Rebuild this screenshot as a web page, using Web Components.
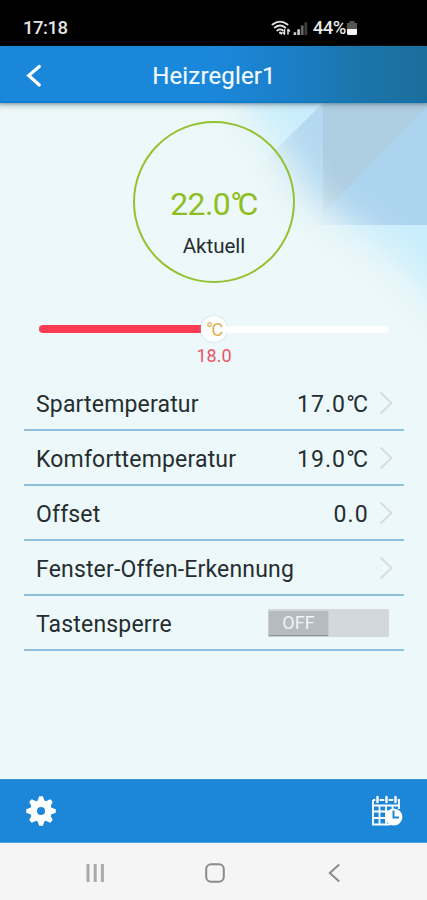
<!DOCTYPE html>
<html lang="de">
<head>
<meta charset="utf-8">
<title>Heizregler1</title>
<style>
html,body{margin:0;padding:0;height:900px;width:427px;overflow:hidden;background:#ecf8f9}
body{font-family:Roboto,"Noto Sans",sans-serif;color:#262d30}
</style>
</head>
<body>
<heat-app></heat-app>
<script>
function define(name, html) {
  const t = document.createElement('template');
  t.innerHTML = html;
  customElements.define(name, class extends HTMLElement {
    constructor() {
      super();
      this.attachShadow({mode: 'open'}).appendChild(t.content.cloneNode(true));
    }
  });
}

define('status-bar', `<style>
:host{display:flex;height:46px;background:#000;color:#e6e6e6;box-sizing:border-box;padding:10px 69px 0 23px;align-items:center;font-size:18.5px;font-weight:500}
.time{flex:1;letter-spacing:-.5px}
.pct{letter-spacing:-.5px;font-size:18.5px;margin-left:4px}
svg{display:block}
</style>
<span class="time">17:18</span>
<svg width="38" height="18" viewBox="0 0 38 18" fill="none" stroke="#e2e2e2" stroke-width="1.9" stroke-linecap="round">
<path d="M1.500 5.500Q9 -.2 16.500 5.500M3.800 8.600Q9 4.600 14.200 8.600M6.300 11.400Q9 9.400 11.800 11.400"/><path d="M9.200 13.700l1 .6" stroke-width="2.400"/>
<path d="M13.500 10.500v4.500M12 13.600l1.500 1.700M17 15v-4.500M18.500 12l-1.500-1.700" stroke-width="1.500"/>
<path fill="#ccc" stroke="none" d="M22.600 13.200h2.600V16h-2.600zM26.300 10.300h2.600V16h-2.600z"/><path fill="#666" stroke="none" d="M29.800 6.500h2.800V16h-2.800z"/><path fill="#3c3c3c" stroke="none" d="M33.400 3.200h2.800V16h-2.800z"/></svg>
<span class="pct">44%</span>
<svg width="12" height="18" viewBox="0 0 12 18"><path fill="#555" d="M3.500 2h5v2H11v6H1V4h2.500z"/><path fill="#f4f4f4" d="M1 10h10v4.500q0 1.500-1.500 1.500h-7Q1 16 1 14.500z"/></svg>`);

define('title-bar', `<style>
:host{display:grid;grid-template-columns:80px 1fr 80px;align-items:center;height:57px;box-sizing:border-box;padding-top:3px;color:#f3faff;background:linear-gradient(90deg,#1b87da 0 50%,#1b7fc9 67%,#1b75ab 84%,#1b6e9c);box-shadow:0 1px 3px #4b708999,inset 0 -2px #0077c270;position:relative;z-index:1}
svg{display:block;margin-left:25px}
h1{margin:0;text-align:center;font-size:24px;font-weight:400;line-height:30px;letter-spacing:.15px;padding-left:1px;-webkit-text-stroke:.15px}
</style>
<svg width="18" height="24" viewBox="0 0 18 24" fill="none" stroke="#fff" stroke-width="3.2" stroke-linecap="round"><path d="M14.300 2.500L3.700 11.500L14.300 21"/></svg>
<h1><slot></slot></h1>`);

define('temp-dial', `<style>
:host{display:flex;flex-direction:column;align-items:center;box-sizing:border-box;width:162px;height:162px;margin:18px 0 0 133px;border:2px solid #94c232;border-radius:50%;padding-top:62px}
.v{font-size:32px;line-height:38px;color:#8fbe22;letter-spacing:-.6px;white-space:nowrap}
.v i{font-style:normal;letter-spacing:-4.500px}
.l{font-size:20.500px;line-height:26px;margin-top:10px}
</style><div class="v">22.0<i>°</i>C</div><div class="l"><slot></slot></div>`);

define('temp-slider', `<style>
:host{display:flex;flex-direction:column;align-items:center;margin-top:32px;height:61px}
.t{display:flex;align-items:center;width:349px;height:28px}
.a{width:162px;height:8px;background:#fb3c52;border-radius:4px 0 0 4px}
.b{flex:1;height:7px;background:#fff;border-radius:0 4px 4px 0}
.k{width:26px;height:26px;border-radius:50%;background:#fff;box-shadow:0 0 2px #bcc;display:flex;align-items:center;justify-content:center;color:#e2ad55;font-size:18px;letter-spacing:-1.500px}
.n{font-size:18px;line-height:22px;color:#e95468;margin-top:2px;padding-left:1px}
</style><div class="t"><div class="a"></div><div class="k">°C</div><div class="b"></div></div><div class="n"><slot></slot></div>`);

define('setting-row', `<style>
:host{display:flex;align-items:center;box-sizing:border-box;height:55px;padding:4px 10px 0 12px;border-bottom:2px solid #8ec0dc;font-size:23px;white-space:nowrap}
.l{flex:1;letter-spacing:.17px}
svg{display:block;margin:-4px 0 0 9px}
.c{display:contents}
:host([switch]) .c{display:none}
::slotted(b){font-weight:400;letter-spacing:1.200px}
</style><span class="l"><slot></slot></span><slot name="value"></slot><div class="c">
<svg width="16" height="24" viewBox="0 0 16 24" fill="none" stroke="#d6dcde" stroke-width="1.800"><path d="M2.500 1.500L13.500 12L2.500 22.500"/></svg></div>`);

define('degree-value', `<style>:host{letter-spacing:1.100px}i{font-style:normal;letter-spacing:-1.800px}</style><slot></slot><i>°</i>C`);

define('off-switch', `<style>
:host{display:flex;width:121px;height:28px;background:#d2d8dc;margin-right:5px;margin-top:-4px;box-sizing:border-box;padding:2px 0 1px 1px;font-size:18px}
span{width:59px;height:24px;display:flex;align-items:center;justify-content:center;background:#b5bbc0;color:#eff4f6;box-shadow:0 1px 1px #8e969b}
</style><span>OFF</span>`);

define('tool-bar', `<style>
:host{display:flex;align-items:center;justify-content:space-between;height:64px;box-sizing:border-box;padding:0 24px 0 25px;background:#1c87d9;border-top:1px solid #3b91cc;border-bottom:1px solid #4aa0df}
svg{display:block}
</style>
<svg id="gear" width="32" height="32" viewBox="-16 -16 32 32"><g fill="#fff" stroke="#fff" stroke-linejoin="round"><circle r="10.500"/><g id="teeth" stroke-width="1.600"></g></g><circle r="4" fill="#1c87d9"/></svg>
<svg width="32" height="32" viewBox="0 0 32 32"><path fill="none" stroke="#fff" stroke-width="1.800" d="M2 5v24.500h17M2 5h26v9M2 10.500h26M2 16.500h17M2 23h15M8.500 10v19.500M15 10v19.500M21.500 10v6"/><path stroke="#1c87d9" stroke-width="4.400" d="M6.500 1v6M15.500 1v6M24.500 1v6"/><path stroke="#fff" stroke-width="2.400" stroke-linecap="round" d="M6.500 2v5M15.500 2v5M24.500 2v5"/><circle cx="22.800" cy="22" r="8.600" fill="#fff"/><path fill="none" stroke="#1c87d9" stroke-width="2" d="M22.500 15.500V22.500H28"/></svg>`);

define('nav-bar', `<style>
:host{display:grid;grid-template-columns:60px 1fr 60px;height:57px;box-sizing:border-box;padding:3px 63px 0 65px;align-items:center;justify-items:center;background:#f5f5f5}
svg{display:block}
</style>
<svg width="20" height="20" viewBox="0 0 20 20" stroke="#aaa" stroke-width="3"><path d="M3 1v18M10.200 1v18M17.400 1v18"/></svg>
<svg width="22" height="22" viewBox="0 0 22 22"><rect x="2.200" y="2.200" width="17.600" height="17.600" rx="5" fill="none" stroke="#8b8b8b" stroke-width="2"/></svg>
<svg width="14" height="20" viewBox="0 0 14 20" fill="none" stroke="#8b8b8b" stroke-width="2"><path d="M12.200 1.500L2.800 10L12.200 18.500"/></svg>`);

define('heat-app', `<style>
:host{display:flex;flex-direction:column;width:427px;height:900px;background:#ecf8f9}
main{height:676px;flex:none;position:relative}
.bg{position:absolute;right:0;top:0;display:block}
.content{position:relative;display:flex;flex-direction:column}
.list{margin:0 23px 0 24px}
</style>
<status-bar></status-bar><title-bar>Heizregler1</title-bar>
<main>
<svg class="bg" width="300" height="260" viewBox="127 103 300 260">
<defs><filter id="b" filterUnits="userSpaceOnUse" x="127" y="0" width="420" height="400"><feGaussianBlur stdDeviation="18"/></filter>
<mask id="k" maskUnits="userSpaceOnUse" x="127" y="103" width="300" height="260"><path filter="url(#b)" fill="#fff" d="M225 20L245 103Q278 140 298 175Q320 210 360 232Q400 257 440 305L520 380V20z"/></mask></defs>
<g mask="url(#k)"><path fill="#c9edfc" d="M127 103H427V363H127z"/>
<path fill="#b3d8f1" d="M323 103H427V225H200z"/><path fill="#adcde0" d="M323 103H427V107L323 213z"/><path fill="#adcfe2" d="M323 213L311 225H323z"/><path fill="#acd4ef" d="M427 107V225H311z"/></g>
</svg>
<svg class="bg" width="427" height="9" viewBox="0 103 427 9" preserveAspectRatio="none"><defs><linearGradient id="e" x1="0" y1="0" x2="0" y2="1"><stop stop-color="#6f8289" stop-opacity=".3"/><stop offset="1" stop-color="#a8bcc2" stop-opacity="0"/></linearGradient></defs><rect y="103" width="427" height="9" fill="url(#e)"/></svg>
<div class="content">
<temp-dial>Aktuell</temp-dial>
<temp-slider>18.0</temp-slider>
<div class="list">
<setting-row>Spartemperatur<degree-value slot="value">17.0</degree-value></setting-row>
<setting-row>Komforttemperatur<degree-value slot="value">19.0</degree-value></setting-row>
<setting-row>Offset<b slot="value">0.0</b></setting-row>
<setting-row>Fenster-Offen-Erkennung</setting-row>
<setting-row switch>Tastensperre<off-switch slot="value"></off-switch></setting-row>
</div></div>
</main>
<tool-bar></tool-bar><nav-bar></nav-bar>`);

const teeth = document.querySelector('heat-app').shadowRoot.querySelector('tool-bar').shadowRoot.getElementById('teeth');
for (let i = 0; i < 8; i++) {
  const r = document.createElementNS('http://www.w3.org/2000/svg', 'path');
  r.setAttribute('d', 'M-2.800 -9.500L-1.300 -14H1.300L2.800 -9.500z');
  r.setAttribute('transform', `rotate(${i * 45})`);
  teeth.appendChild(r);
}
</script>
</body>
</html>
